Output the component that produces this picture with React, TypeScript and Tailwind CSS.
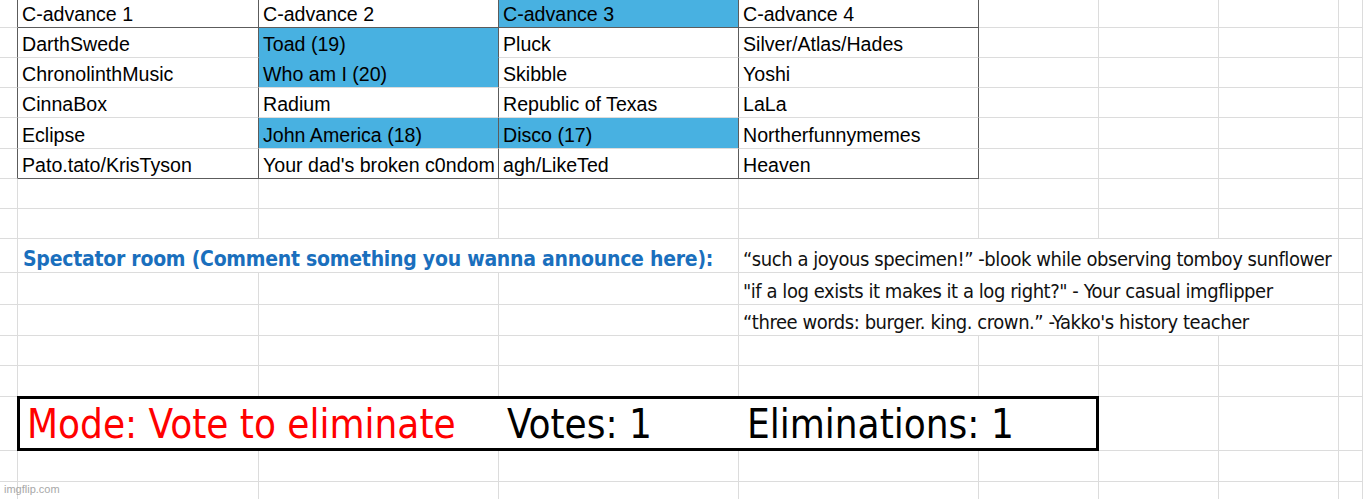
import React from "react";

const grid = "grid grid-cols-[18px_241px_240px_240px_240px_120px_120px_120px_24px]";
const line = "border-[#dcdcdc]";
const blue = "bg-[#48b1e1]";

const body = { fontFamily: "'Liberation Sans', Arial, sans-serif" };
const narrow = { fontFamily: "'Liberation Sans Narrow', 'DejaVu Sans Condensed', 'Roboto Condensed', 'Liberation Sans', sans-serif" };

type C = { t?: string; cls?: string; span?: string };

function Cell({ t, cls = "", span = "" }: C) {
	return (
		<div className={`h-full border-r border-b ${line} ${cls} ${span} flex items-end overflow-visible whitespace-nowrap`}>
			{t && <span className="pl-[4px] pb-[2px] text-[19.6px] leading-none text-black" style={body}>{t}</span>}
		</div>
	);
}

const table = [
	["C-advance 1", "C-advance 2", "C-advance 3", "C-advance 4"],
	["DarthSwede", "Toad (19)", "Pluck", "Silver/Atlas/Hades"],
	["ChronolinthMusic", "Who am I (20)", "Skibble", "Yoshi"],
	["CinnaBox", "Radium", "Republic of Texas", "LaLa"],
	["Eclipse", "John America (18)", "Disco (17)", "Northerfunnymemes"],
	["Pato.tato/KrisTyson", "Your dad's broken c0ndom", "agh/LikeTed", "Heaven"],
];

// which cells carry the blue fill: [row, col]
const filled = ["0-2", "1-1", "2-1", "4-1", "4-2"];
const heights = ["h-[28px]", "h-[30px]", "h-[30px]", "h-[30px]", "h-[31px]", "h-[30px]"];

const quotes = [
	"“such a joyous specimen!” -blook while observing tomboy sunflower",
	"\"if a log exists it makes it a log right?\" - Your casual imgflipper",
	"“three words: burger. king. crown.” -Yakko's history teacher",
];

function Blank({ n }: { n: number }) {
	return (
		<>
			{Array.from({ length: n }).map((_, i) => (
				<Cell key={i} />
			))}
		</>
	);
}

function Quote({ t }: { t: string }) {
	return (
		<div className={`col-span-4 h-full border-r border-b ${line} flex items-end whitespace-nowrap`}>
			<span className="pl-[4px] pb-[3px] text-[20px] tracking-[-0.45px] leading-none text-[#111]" style={narrow}>
				{t}
			</span>
		</div>
	);
}

export default function App() {
	return (
		<div className="relative w-[1363px] h-[499px] overflow-hidden bg-white">
			{table.map((row, r) => (
				<div key={r} className={`${grid} ${heights[r]}`}>
					<Cell cls={`!border-r-[#5c5c5c]`} />
					{row.map((t, c) => {
						const isBlue = filled.includes(`${r}-${c}`);
						const blueBelow = filled.includes(`${r + 1}-${c}`);
						let b = "";
						if (r === 0 || r === 5) b = `!border-b-[#5c5c5c]`;
						else if (isBlue && blueBelow) b = `!border-b-[#48b1e1]`;
						return <Cell key={c} t={t} cls={`!border-r-[#5c5c5c] ${b} ${isBlue ? blue : ""}`} />;
					})}
					<Blank n={4} />
				</div>
			))}

			<div className={`${grid} h-[30px]`}><Blank n={9} /></div>
			<div className={`${grid} h-[30px]`}><Blank n={9} /></div>

			{/* spectator room */}
			<div className={`${grid} h-[34px]`}>
				<Cell />
				<div className={`col-span-3 h-full border-r border-b ${line} flex items-end whitespace-nowrap`}>
					<span className="pl-[5px] pb-[2px] text-[21px] tracking-[-0.25px] leading-none font-bold text-[#1a6fbd]" style={narrow}>
						Spectator room (Comment something you wanna announce here):
					</span>
				</div>
				<Quote t={quotes[0]} />
				<Cell />
			</div>
			<div className={`${grid} h-[32px]`}>
				<Blank n={4} />
				<Quote t={quotes[1]} />
				<Cell />
			</div>
			<div className={`${grid} h-[31px]`}>
				<Blank n={4} />
				<Quote t={quotes[2]} />
				<Cell />
			</div>
			<div className={`${grid} h-[30px]`}><Blank n={9} /></div>
			<div className={`${grid} h-[31px]`}><Blank n={9} /></div>

			{/* status box */}
			<div className={`${grid} h-[54px]`}>
				<Cell />
				<div className="col-span-5 grid grid-cols-[481px_240px_360px] border-[3px] border-black -ml-[1px] -mt-[1px] h-[55px]">
					<div className="flex items-center pl-[7px] whitespace-nowrap">
						<span className="text-[40px] leading-none text-[#ff0000]" style={narrow}>Mode: Vote to eliminate</span>
					</div>
					<div className="flex items-center pl-[6px] whitespace-nowrap">
						<span className="text-[40px] leading-none text-black" style={narrow}>Votes: 1</span>
					</div>
					<div className="flex items-center pl-[6px] whitespace-nowrap">
						<span className="text-[40px] leading-none text-black" style={narrow}>Eliminations: 1</span>
					</div>
				</div>
				<Blank n={3} />
			</div>
			<div className={`${grid} h-[31px]`}><Blank n={9} /></div>
			<div className={`${grid} h-[31px]`}><Blank n={9} /></div>

			<span className="absolute left-[4px] bottom-[4px] text-[11px] leading-none text-[#a8a8a8]" style={body}>imgflip.com</span>
		</div>
	);
}
